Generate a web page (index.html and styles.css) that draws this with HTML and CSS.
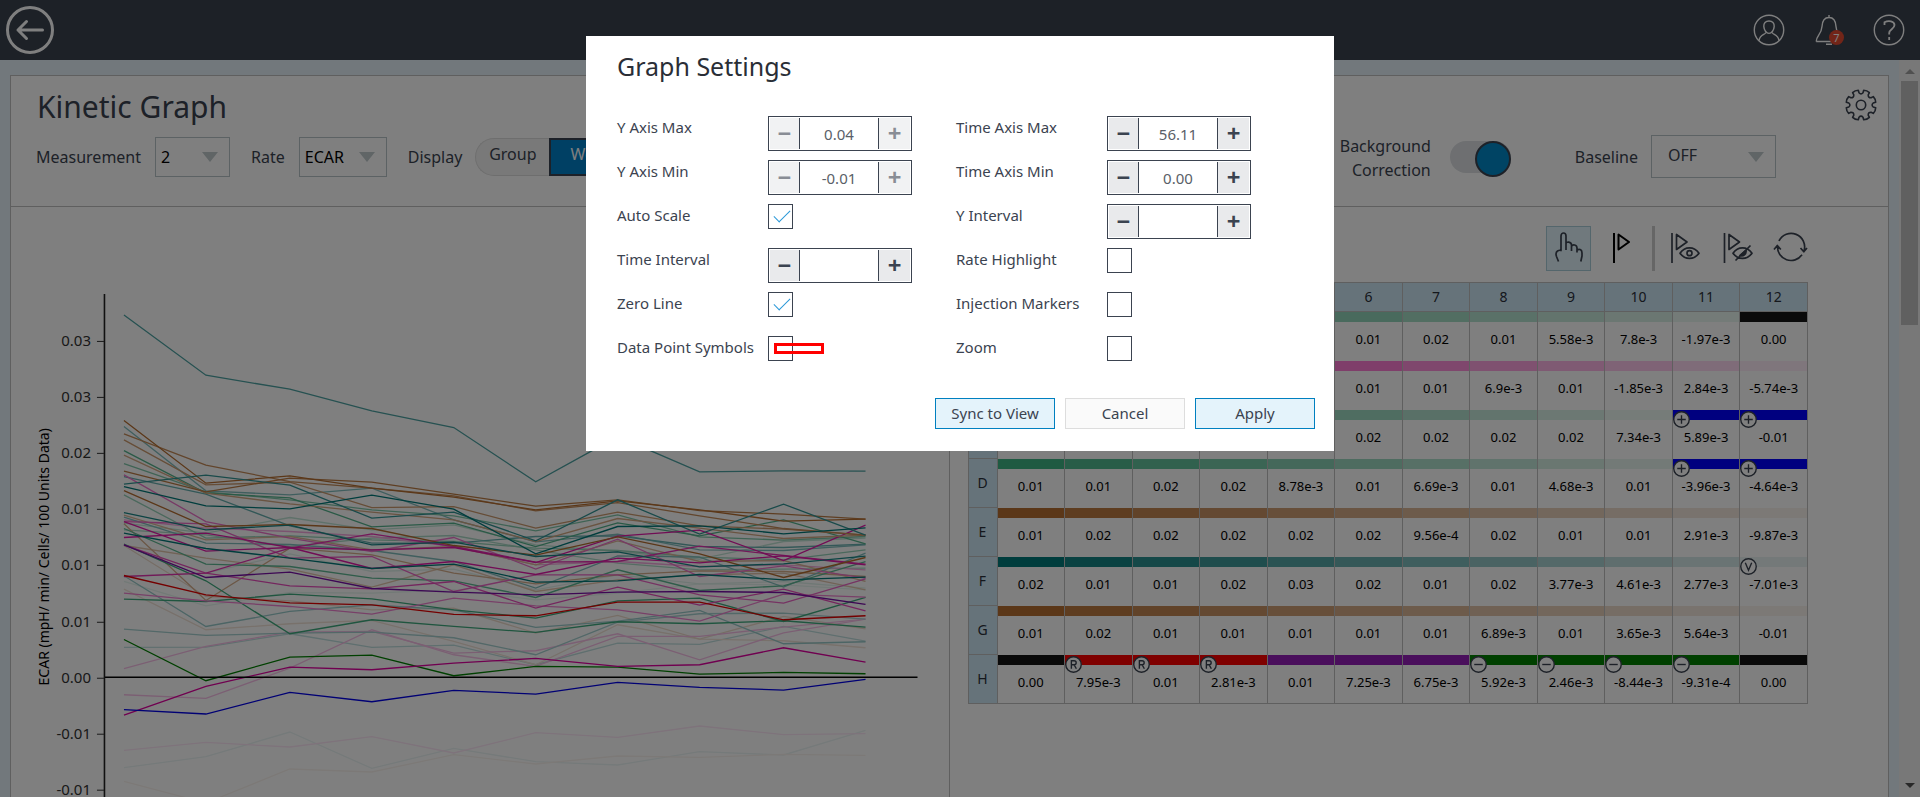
FILE: index.html
```html
<!DOCTYPE html>
<html lang="en">
<head>
<meta charset="utf-8">
<title>Kinetic Graph</title>
<link rel="stylesheet" href="styles.css">
</head>
<body>
<header class="topbar">
  <button class="icon-btn" aria-label="Back">
    <svg width="48" height="48" viewBox="0 0 48 48" fill="none" stroke="#fff" stroke-width="3" stroke-linecap="round" stroke-linejoin="round"><circle cx="24" cy="24" r="22.5"/><path d="M36.5 24H12M20.500 15.500L12 24l8.500 8.500"/></svg>
  </button>
  <div class="topbar-actions">
    <button class="icon-btn" aria-label="Account">
      <svg width="32" height="32" viewBox="0 0 32 32" fill="none" stroke="#fff" stroke-width="1.400"><circle cx="16" cy="16" r="14.700"/><path d="M16 7c-3.500 0-5.400 2.300-5.200 5.400.2 3.600 2.500 7 5.200 7s5-3.400 5.200-7C21.400 9.300 19.500 7 16 7zM12.700 18.500c-.2 2.500-5.500 1.500-6.700 8M19.300 18.500c.2 2.500 5.500 1.500 6.700 8"/></svg>
    </button>
    <button class="icon-btn" aria-label="Notifications">
      <svg width="32" height="32" viewBox="0 0 32 32" fill="none" stroke="#fff" stroke-width="1.400"><path d="M16 1v2.500M3.200 27.500h23M3.200 27.500c0-6 5.300-7 5.800-15C9.300 7 11.500 3.500 16 3.500s6.700 3.500 7 9c.3 5 1.500 7 3 9M13 30.300h6"/></svg>
      <span class="count">7</span>
    </button>
    <button class="icon-btn" aria-label="Help">
      <svg width="32" height="32" viewBox="0 0 32 32" fill="none" stroke="#fff"><circle cx="16" cy="16" r="14.700" stroke-width="1.400"/><path stroke-width="1.800" d="M11.500 11V8.300C15.500 6 21.500 7 21.500 11c0 4-5.300 4.500-5.300 8v1.500M16.200 23v3"/></svg>
    </button>
  </div>
</header>

<div class="viewport">
  <main class="page">
    <section class="panel">
      <div class="panel-head">
        <div class="title-row">
          <h1>Kinetic Graph</h1>
          <button class="icon-btn" aria-label="Settings">
            <svg width="32" height="32" viewBox="0 0 32 32" fill="none" stroke="#3b4350" stroke-width="1.600" stroke-linejoin="round"><circle cx="16" cy="16" r="4.700"/><path id="gear"/></svg>
          </button>
        </div>
        <div class="controls">
          <label for="measurement">Measurement</label>
          <span class="select select-sm"><select id="measurement"><option>2</option></select></span>
          <label for="rate">Rate</label>
          <span class="select select-md"><select id="rate"><option>ECAR</option></select></span>
          <span class="caption">Display</span>
          <div class="segment"><button>Group</button><button class="on">Well</button></div>
          <label class="push two-line" for="bgcorr">Background Correction</label>
          <input class="switch" id="bgcorr" type="checkbox" checked>
          <label class="baseline" for="baseline">Baseline</label>
          <span class="select select-lg"><select id="baseline"><option>OFF</option></select></span>
        </div>
      </div>
      <div class="panel-body">
        <div class="graph"><svg id="chart" viewBox="0 0 938 590" role="img" aria-label="ECAR kinetic graph"></svg></div>
        <div class="plate">
          <div class="tools">
            <button class="tool active" aria-label="Select"><svg width="45" height="45" viewBox="0 0 45 45"><path d="M12.500 35.500l-2-5c-1-3-.5-4.500 1-5.500 2-1.200 3.500-.5 3.500-.5V10c0-4 5-4 5 0v14M20 18c0-3 5.500-2.500 5.500 1v6M25.500 20.500c1-2.500 5.500-2 5.500 1.500v4.500M31 24c3-1.500 5 0 5 3v3l-1.200 5.500"/></svg></button>
            <button class="tool" aria-label="Flag"><svg class="black" width="45" height="45" viewBox="0 0 45 45"><path d="M15 7v30M19.500 8.500v15L30 16z"/></svg></button>
            <span class="divider"></span>
            <button class="tool" aria-label="Show flagged"><svg width="45" height="45" viewBox="0 0 45 45"><path d="M9 7v30M13.500 8.500v15L24 16zM17 27.200c5-7 14-7 19 0-5 7-14 7-19 0z"/><circle cx="26.500" cy="27.200" r="2.500"/></svg></button>
            <button class="tool" aria-label="Hide flagged"><svg width="45" height="45" viewBox="0 0 45 45"><path d="M8.500 7v30M13 8.500v15L23.500 16zM17 27.200c5-7 14-7 19 0-5 7-14 7-19 0zM19.500 34.500l15-15"/><path class="solid" d="M30 24.500a4.500 4.500 0 0 1-6 5z"/></svg></button>
            <button class="tool" aria-label="Reset"><svg width="45" height="45" viewBox="0 0 45 45"><path d="M10 15a13.500 13.500 0 0 1 25 10M33 28.800a13.500 13.500 0 0 1-24.500-8.500M5 23.500l3.300-4 3.500 4M31.500 22l3.300 3.800L38 22"/></svg></button>
          </div>
          <table id="wells"></table>
        </div>
      </div>
    </section>
  </main>
  <div class="scrollbar"><span class="up"></span><span class="thumb"></span><span class="down"></span></div>
</div>

<div class="overlay">
  <div class="dialog" role="dialog" aria-labelledby="dialog-title">
    <h2 id="dialog-title">Graph Settings</h2>
    <div class="fields">
      <label for="ymax">Y Axis Max</label>
      <div class="stepper"><button disabled aria-label="Decrease">−</button><input id="ymax" type="text" value="0.04"><button disabled aria-label="Increase">+</button></div>
      <label for="tmax">Time Axis Max</label>
      <div class="stepper"><button aria-label="Decrease">−</button><input id="tmax" type="text" value="56.11"><button aria-label="Increase">+</button></div>

      <label for="ymin">Y Axis Min</label>
      <div class="stepper"><button disabled aria-label="Decrease">−</button><input id="ymin" type="text" value="-0.01"><button disabled aria-label="Increase">+</button></div>
      <label for="tmin">Time Axis Min</label>
      <div class="stepper"><button aria-label="Decrease">−</button><input id="tmin" type="text" value="0.00"><button aria-label="Increase">+</button></div>

      <label for="auto">Auto Scale</label>
      <input id="auto" class="check" type="checkbox" checked>
      <label for="yint">Y Interval</label>
      <div class="stepper"><button aria-label="Decrease">−</button><input id="yint" type="text"><button aria-label="Increase">+</button></div>

      <label for="tint">Time Interval</label>
      <div class="stepper"><button aria-label="Decrease">−</button><input id="tint" type="text"><button aria-label="Increase">+</button></div>
      <label for="high">Rate Highlight</label>
      <input id="high" class="check" type="checkbox">

      <label for="zero">Zero Line</label>
      <input id="zero" class="check" type="checkbox" checked>
      <label for="inj">Injection Markers</label>
      <input id="inj" class="check" type="checkbox">

      <label for="dots">Data Point Symbols</label>
      <div class="marked"><input id="dots" class="check" type="checkbox"><span class="marker"></span></div>
      <label for="zoom">Zoom</label>
      <input id="zoom" class="check" type="checkbox">
    </div>
    <div class="actions">
      <button class="primary">Sync to View</button>
      <button>Cancel</button>
      <button class="primary">Apply</button>
    </div>
  </div>
</div>
<script src="script.js"></script>
</body>
</html>
```
FILE: styles.css
```css
* { box-sizing: border-box; }
body {
  margin: 0;
  height: 100vh;
  overflow: hidden;
  display: flex;
  flex-direction: column;
  font-family: "Noto Sans", "Open Sans", sans-serif;
  font-size: 16px;
  color: #3b4350;
}
button, input, select { font: inherit; color: inherit; margin: 0; }
button { cursor: pointer; }
svg { display: block; }

.icon-btn { position: relative; border: 0; padding: 0; background: none; }
.topbar {
  flex: none;
  height: 60px;
  padding: 0 15px 0 6px;
  display: flex;
  align-items: center;
  justify-content: space-between;
  background: #3a424f;
}
.topbar-actions { display: flex; gap: 28px; }
.count {
  position: absolute;
  right: 1px;
  bottom: 1px;
  width: 15px;
  height: 15px;
  border-radius: 50%;
  background: #e54a30;
  color: #fff;
  font-size: 11px;
  line-height: 15px;
  text-align: center;
}

.viewport { flex: 1; min-height: 0; display: flex; background: #e4f0f8; }
.page { flex: 1; min-width: 0; padding: 15px 10px 0; }
.panel { height: 100%; display: flex; flex-direction: column; background: #fff; border: 1px solid #bfbfbf; border-bottom: 0; }
.panel-head { padding-bottom: 28px; border-bottom: 1px solid #bfbfbf; }
.title-row { display: flex; justify-content: space-between; align-items: flex-start; padding: 8px 11px 0 26px; }
.title-row .icon-btn { margin-top: 5px; }
h1 { margin: 0; font-size: 30px; font-weight: 400; line-height: 46px; }
.controls { display: flex; align-items: center; padding: 5px 112px 0 25px; }
.select { position: relative; display: block; height: 40px; margin: 0 21px 0 14px; }
.select select {
  appearance: none;
  width: 100%;
  height: 100%;
  padding: 0 5px;
  border: 1px solid #b8c4c8;
  border-radius: 0;
  background: none;
  color: #000;
}
.select::after {
  content: "";
  position: absolute;
  right: 12px;
  top: 15px;
  border: 8px solid transparent;
  border-top: 10px solid #c0cacc;
  border-bottom: 0;
}
.select-sm { width: 75px; }
.select-md { width: 88px; }
.select-lg { width: 125px; height: 43px; margin: 0 0 0 13px; }
.select-lg::after { top: 17px; }
.select-lg select { padding: 0 16px 3px; color: #3b4350; }
.segment { display: flex; height: 38px; margin-left: 13px; }
.segment button { width: 74px; padding: 0 0 5px; border: 1px solid #ddd; border-right: 0; border-radius: 19px 0 0 19px; background: #f2f2f2; line-height: 22px; }
.segment .on { border: 2px solid #3b4350; border-radius: 0 19px 19px 0; background: #0080c8; color: #fff; }
.push { margin-left: auto; }
.two-line { width: 101px; margin-top: -1px; margin-bottom: -4px; text-align: right; line-height: 24px; }
.switch {
  appearance: none;
  width: 61px;
  height: 32px;
  margin-left: 19px;
  border-radius: 16px;
  background: #dcdfe2;
}
.switch::after {
  content: "";
  display: block;
  width: 32px;
  height: 32px;
  margin-left: auto;
  border: 2px solid #3b4350;
  border-radius: 50%;
  background: #0088c8;
}
.baseline { margin-left: 64px; }

.panel-body { flex: 1; min-height: 0; display: grid; grid-template-columns: 1fr 1fr; }
.graph { border-right: 1px solid #bfbfbf; overflow: hidden; }
.graph svg { width: 100%; height: auto; }
.graph polyline { fill: none; stroke-width: 1.300; }
.graph text { font-size: 15px; fill: #333; }
.graph .axis-title { font-size: 14px; text-anchor: middle; fill: #000; }
.graph .tick-label { text-anchor: end; }
.plate { padding: 19px 75px 0 18px; }
.tools { display: flex; justify-content: flex-end; gap: 8px; margin: 0 -1px 11px 0; }
.tool { width: 45px; height: 45px; padding: 0; border: 0; background: none; }
.tool svg { fill: none; stroke: #3b4350; stroke-width: 1.700; stroke-linejoin: round; }
.tool .black { stroke: #000; stroke-width: 2; }
.tool .solid { fill: #3b4350; }
.tool.active { background: #e0f2fa; outline: 1px solid #a8ccd8; outline-offset: -1px; }
.divider { width: 3px; background: #ccc; }
table { width: calc(100% - 5px); border-collapse: collapse; table-layout: fixed; font-size: 13px; color: #000; }
th { width: 29px; padding: 0 0 2px; border: 1px solid #bfbfbf; background: #cde6f4; color: #2a303a; font-size: 14px; font-weight: 400; }
thead th { width: auto; height: 29px; }
thead th:first-child { width: 29px; }
td { position: relative; height: 49px; padding: 0; border-left: 1px solid #bfbfbf; border-right: 1px solid #bfbfbf; text-align: center; vertical-align: top; }
tbody tr:last-child td { border-bottom: 1px solid #bfbfbf; }
.bar { height: 10px; }
.value { line-height: 35px; }
.flag { position: absolute; left: 0; top: 1px; width: 17px; height: 17px; fill: #fff; stroke: #3b4350; stroke-width: 1.300; }
.flag path { fill: none; }

.scrollbar { width: 21px; flex: none; display: flex; flex-direction: column; align-items: center; padding: 9px 0 9px; background: #f1f1f1; }
.up { border: 5px solid transparent; border-top: 0; border-bottom-color: #a0a0a0; }
.thumb { width: 17px; height: 244px; margin-top: 7px; background: #c1c1c1; }
.down { margin-top: auto; border: 5px solid transparent; border-bottom: 0; border-top-color: #505050; }

.overlay { position: fixed; inset: 0; display: flex; justify-content: center; align-items: flex-start; padding-top: 36px; background: rgba(0, 0, 0, 0.5); }
.dialog { width: 748px; padding: 10px 19px 22px 31px; background: #fff; font-size: 15px; }
h2 { margin: 0 0 30px; font-size: 25px; font-weight: 400; line-height: 40px; color: #2a2e36; }
.fields { display: grid; grid-template-columns: 151px 188px 151px 144px; grid-auto-rows: 44px; }
.fields label { line-height: 23px; }
.stepper { display: flex; width: 144px; height: 35px; padding: 1px; border: 1px solid #3b4350; }
.stepper button { width: 31px; padding: 0 0 2px; border: 0; background: #e9eaec; font-size: 24px; font-weight: 700; line-height: 28px; }
.stepper button:first-child { width: 29px; }
.stepper button:disabled { opacity: 0.6; }
.stepper input { flex: 1; min-width: 0; border: solid #3b4350; border-width: 0 1px; border-radius: 0; padding: 0; text-align: center; color: #5a5f68; background: none; }
.check { appearance: none; display: block; width: 25px; height: 25px; border: 1px solid #3b4350; background: #fff; }
.check:checked::after { content: ""; display: block; width: 7px; height: 15px; margin: 1px 0 0 9px; border: solid #2a98d8; border-width: 0 1px 1px 0; transform: rotate(45deg); }
.marked { position: relative; }
.marker { position: absolute; left: 6px; top: 7px; width: 50px; height: 11px; border: 3px solid #f00; }
.actions { display: flex; justify-content: flex-end; gap: 10px; margin-top: 18px; }
.actions button { width: 120px; height: 31px; padding: 0 0 1px; border: 1px solid #ddd; background: #fafafa; }
.actions .primary { border-color: #0080c0; background: #e4f3fb; }
```
FILE: script.js
```js
const NS = "http://www.w3.org/2000/svg";
const make = (tag, attrs, parent, text) => {
  const el = document.createElementNS(NS, tag);
  for (const key in attrs) el.setAttribute(key, attrs[key]);
  if (text) el.textContent = text;
  parent.append(el);
  return el;
};
const mix = (hex, strength) => {
  const rgb = [1, 3, 5].map(i => parseInt(hex.slice(i, i + 2), 16));
  return "rgb(" + rgb.map(v => Math.round(255 - (255 - v) * strength)).join(",") + ")";
};

/* gear outline with eight teeth */
const teeth = [];
for (let i = 0; i < 8; i++) {
  const p = (r, deg) => {
    const a = (i * 45 + deg + 22.5) * Math.PI / 180;
    return (16 + r * Math.cos(a)).toFixed(1) + " " + (16 + r * Math.sin(a)).toFixed(1);
  };
  teeth.push(p(14.9, -12) + "Q" + p(15.8, 0) + " " + p(14.9, 12) + "L" + p(12.4, 13) + "Q" + p(10, 22.5) + " " + p(12.4, 32));
}
document.getElementById("gear").setAttribute("d", "M" + teeth.join("L") + "Z");

/* chart */
const chart = document.getElementById("chart");
const xs = [113, 195, 279, 361, 443, 525, 607, 689, 773, 855];
const brown = "#b66e30", teal = "#007a7a", green = "#2aa070", pink = "#e000a0";
const series = [
  [mix(teal, .08), [1464,1431,1357,1466,1406,1446,1456,1416,1426,1352]],
  [mix(pink, .1), [1412,1388,1402,1371,1420,1359,1373,1339,1365,1362]],
  [mix(brown, .08), [1505,1570,1468,1477,1425,1453,1429,1433,1424,1427]],
  [mix(green, .12), [905,978,938,940,930,960,940,912,915,930]],
  [mix(green, .15), [890,880,822,875,868,930,885,912,905,925]],
  [mix(teal, .25), [1103,1102,1062,1103,1096,1155,1090,1094,1040,1084]],
  [mix(brown, .2), [928,1050,1032,1022,1085,1155,1035,1078,1083,1104]],
  [mix(brown, .25), [797,950,963,990,985,1060,1007,1078,1010,1047]],
  [mix(pink, .25), [1167,1100,1057,1055,1120,1113,1062,1140,1059,1018]],
  [mix(pink, .25), [1245,1256,1165,1050,1125,1160,1070,1070,1042,1018]],
  [mix(teal, .4), [888,1040,995,975,990,1043,1024,992,1092,1086]],
  [mix(teal, .35), [1048,1067,1060,1057,1074,1125,1027,1002,1000,1018]],
  [mix(green, .3), [730,760,713,750,735,795,815,838,785,775]],
  [mix(green, .4), [750,765,800,775,767,810,850,870,868,865]],
  [mix(green, .5), [645,775,768,780,785,805,812,832,840,810]],
  [mix(pink, .35), [720,745,755,770,800,855,845,860,855,870]],
  [mix(brown, .4), [797,835,868,922,855,935,900,885,880,930]],
  [mix(brown, .5), [706,780,770,810,800,855,783,845,842,905]],
  [mix(brown, .55), [732,962,805,825,880,912,885,873,875,890]],
  [mix(teal, .5), [440,633,645,625,720,786,763,810,812,795]],
  [mix(teal, .6), [590,643,738,790,790,770,768,800,803,793]],
  [mix(teal, .5), [712,790,794,812,845,925,828,832,922,820]],
  [mix(green, .6), [551,636,660,690,708,753,705,771,781,770]],
  [mix(green, .8), [512,640,654,741,730,800,729,768,720,792]],
  [mix(green, .75), [746,853,860,895,903,953,870,932,918,845]],
  [mix(green, .9), [793,903,1062,1020,1040,1058,1026,1032,1023,1042]],
  [mix(green, .9), [958,965,943,957,990,1015,963,955,1025,953]],
  [mix(pink, .5), [940,963,980,1003,955,978,990,1024,943,952]],
  [mix(pink, .55), [585,725,775,815,773,868,778,890,858,895]],
  [mix(pink, .6), [725,732,835,830,935,885,885,945,970,897]],
  [mix(pink, .7), [795,880,918,927,905,985,922,976,928,993]],
  [mix(pink, .8), [890,880,805,762,800,847,845,799,827,853]],
  [mix(pink, .9), [773,760,803,866,845,884,835,849,828,855]],
  [mix(pink, .9), [725,814,803,810,803,848,769,751,842,736]],
  [mix(brown, .6), [526,640,672,697,720,785,716,745,776,766]],
  [mix(brown, .7), [480,615,607,683,680,745,697,738,748,766]],
  [mix(brown, .8), [462,556,605,625,648,693,668,708,746,766]],
  [mix(brown, .9), [574,636,595,607,643,679,660,692,703,718]],
  [brown, [422,610,588,625,652,690,663,690,724,718]],
  [brown, [632,740,734,746,797,826,771,822,893,833]],
  [mix(teal, .7), [105,286,328,393,443,606,470,576,573,574]],
  [mix(teal, .8), [613,586,616,715,697,783,660,763,673,766]],
  [teal, [620,678,687,646,688,822,740,738,762,744]],
  [mix(teal, .9), [698,750,736,795,787,830,816,861,852,829]],
  [teal, [760,806,835,866,853,907,903,884,900,892]],
  ["#7a10a8", [795,893,877,926,937,945,937,935,938,974]],
  ["#e80000", [887,945,969,975,1004,1008,967,967,1020,1008]],
  ["#008000", [1079,1203,1132,1126,1188,1160,1162,1183,1178,1182]],
  ["#e000a0", [1306,1220,1162,1170,1150,1136,1160,1155,1104,1147]],
  ["#0000e8", [1290,1303,1238,1266,1232,1243,1208,1223,1231,1199]]
];
const toY = v => (v / 3 + 73).toFixed(1);
for (const [color, values] of series) {
  make("polyline", { stroke: color, points: values.map((v, i) => xs[i] + "," + toY(v)).join(" ") }, chart);
}
make("path", { d: "M93 470.5H907", stroke: "#000", "stroke-width": 1.3 }, chart);
make("path", { d: "M93.5 87V600", stroke: "#222", "stroke-width": 1.6 }, chart);
["0.03", "0.03", "0.02", "0.01", "0.01", "0.01", "0.00", "-0.01", "-0.01"].forEach((label, i) => {
  const y = Math.round(134 + i * 56.1);
  make("path", { d: `M86 ${y + .5}H93`, stroke: "#333" }, chart);
  make("text", { x: 80, y: y + 5, class: "tick-label" }, chart, label);
});
make("text", { x: 0, y: 0, class: "axis-title", transform: "translate(38 350) rotate(-90)" }, chart, "ECAR (mpH/ min/ Cells/ 100 Units Data)");

/* well plate */
const values = [
  "0.02 0.02 0.01 0.01 0.01 0.01 0.02 0.01 5.58e-3 7.8e-3 -1.97e-3 0.00",
  "0.01 0.01 0.01 0.01 0.01 0.01 0.01 6.9e-3 0.01 -1.85e-3 2.84e-3 -5.74e-3",
  "0.01 0.01 0.02 0.02 0.02 0.02 0.02 0.02 0.02 7.34e-3 5.89e-3 -0.01",
  "0.01 0.01 0.02 0.02 8.78e-3 0.01 6.69e-3 0.01 4.68e-3 0.01 -3.96e-3 -4.64e-3",
  "0.01 0.02 0.02 0.02 0.02 0.02 9.56e-4 0.02 0.01 0.01 2.91e-3 -9.87e-3",
  "0.02 0.01 0.01 0.02 0.03 0.02 0.01 0.02 3.77e-3 4.61e-3 2.77e-3 -7.01e-3",
  "0.01 0.02 0.01 0.01 0.01 0.01 0.01 6.89e-3 0.01 3.65e-3 5.64e-3 -0.01",
  "0.00 7.95e-3 0.01 2.81e-3 0.01 7.25e-3 6.75e-3 5.92e-3 2.46e-3 -8.44e-3 -9.31e-4 0.00"
];
const rows = [["#3eb484", .088], ["#ff20b8", .083], ["#3eb484", .1], ["#3eb484", .097], [brown, .083], [teal, .083], [brown, .083]];
const special = {
  A12: "#151515", C11: "#0000ff", C12: "#0000ff", D11: "#0000ff", D12: "#0000ff",
  H1: "#151515", H2: "#ff0000", H3: "#ff0000", H4: "#ff0000", H5: "#941eb8", H6: "#941eb8", H7: "#941eb8",
  H8: "#008000", H9: "#008000", H10: "#008000", H11: "#008000", H12: "#151515"
};
const flags = { C11: "+", C12: "+", D11: "+", D12: "+", F12: "V", H2: "R", H3: "R", H4: "R", H8: "-", H9: "-", H10: "-", H11: "-" };
const glyph = {
  "+": "M8 4v8M4 8h8",
  "-": "M4 8h8",
  V: "M5 4.500l3 7 3-7",
  R: "M6 12V4.500h2.500c2.700 0 2.700 3.700 0 3.700H6M8.500 8.200l2.200 3.800"
};
let html = "<thead><tr><th></th>";
for (let c = 1; c <= 12; c++) html += `<th>${c}</th>`;
html += "</tr></thead><tbody>";
values.forEach((line, r) => {
  const name = "ABCDEFGH"[r];
  html += `<tr><th>${name}</th>`;
  line.split(" ").forEach((value, c) => {
    const id = name + (c + 1);
    const color = special[id] || mix(rows[r][0], 1 - c * rows[r][1]);
    const flag = flags[id] ? `<svg class="flag" viewBox="0 0 16 16"><circle cx="8" cy="8" r="7.300"/><path d="${glyph[flags[id]]}"/></svg>` : "";
    html += `<td><div class="bar" style="background:${color}"></div>${flag}<div class="value">${value}</div></td>`;
  });
  html += "</tr>";
});
document.getElementById("wells").innerHTML = html + "</tbody>";
```
